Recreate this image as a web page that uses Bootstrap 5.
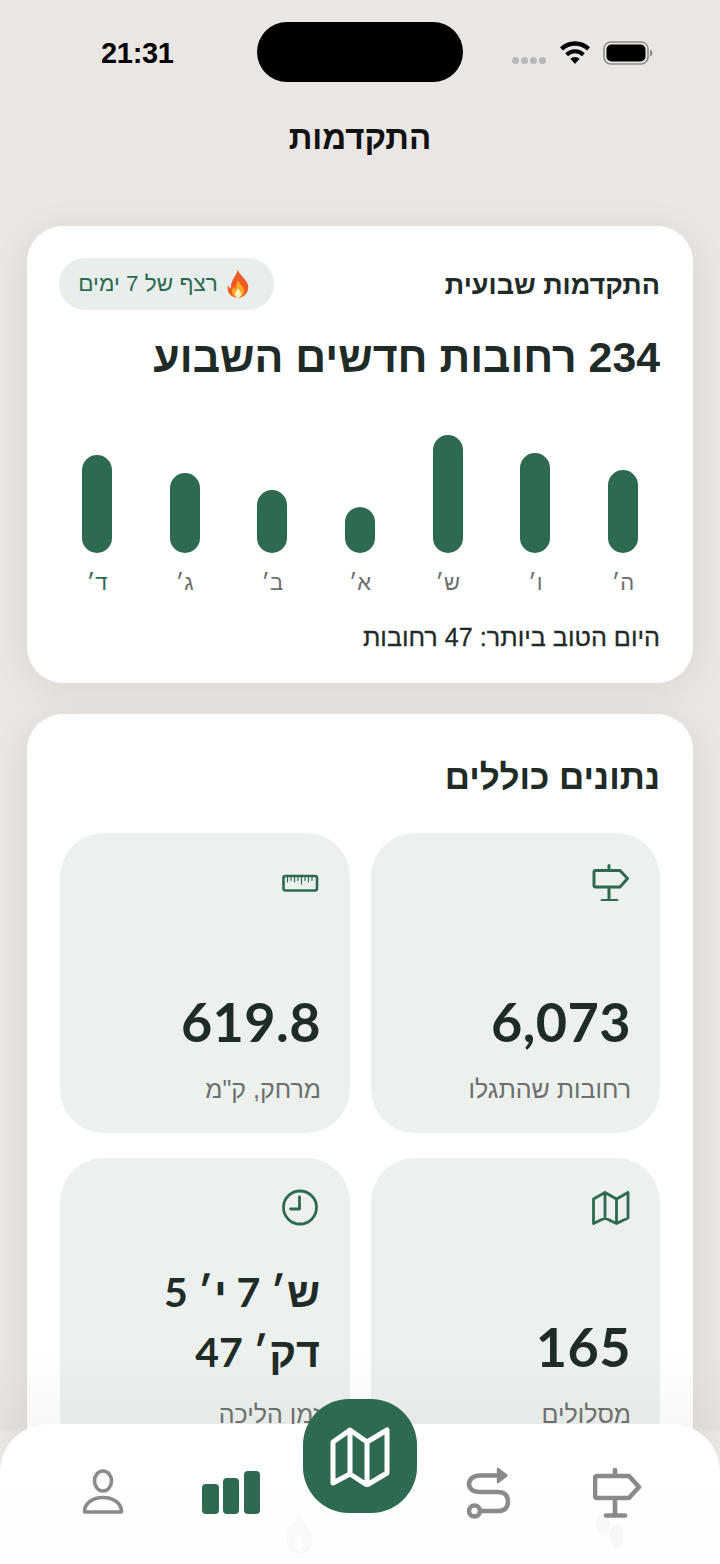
<!DOCTYPE html>
<html lang="he" dir="rtl">
<head>
    <meta charset="UTF-8">
    <title>התקדמות</title>
    <link href="https://cdn.jsdelivr.net/npm/bootstrap@5.3.0/dist/css/bootstrap.min.css" rel="stylesheet">
    <style>
        html, body { height: 100%; }
        body {
            background: #e9e6e3;
            font-family: "Liberation Sans", "Noto Sans", sans-serif;
            color: #1f2b27;
        }
        .phone { position: relative; width: 720px; height: 1564px; overflow: hidden; }
        .status-row { height: 105px; padding: 22px 67px 0 82px; direction: ltr; }
        .clock { font-size: 29px; font-weight: 700; color: #000; width: 108px; text-align: left; padding: 9px 0 0 19px; line-height: 45px; letter-spacing: -.3px; }
        .island { width: 206px; height: 60px; background: #000; border-radius: 30px; margin-left: 67px; }
        .status-icons { margin-left: auto; padding-top: 1px; height: 60px; }
        .signal-dots { margin-top: 15px; margin-right: 13px; gap: 2px; }
        .sig-dot { width: 7px; height: 7px; border-radius: 50%; background: #b9b7b5; }
        .wifi-icon { margin-right: 12px; }
        .page-title { font-size: 33px; font-weight: 700; color: #111; text-align: center; line-height: 40px; margin: 13px 0 68px; }
        .panel {
            background: #fff;
            border-radius: 36px;
            margin: 0 27px 31px;
            padding: 33px 33px 29px;
            box-shadow: 0 6px 40px rgba(50, 40, 30, .07);
        }
        .panel-head { height: 52px; }
        .panel-sub { font-size: 27px; font-weight: 700; line-height: 52px; }
        .streak { height: 52px; width: 215px; margin: 0 0 2px -1px; padding-right: 5px; border-radius: 26px; background: #e8eeeb; color: #2d6a4f; font-size: 22.5px; }
        .headline { font-size: 42.8px; font-weight: 700; line-height: 50px; margin: 21px 0 53px; }
        .bar-chart { height: 163px; padding: 0 22px; }
        .bar-col { width: 30px; }
        .bar-fill { width: 30px; background: #2d6a4f; border-radius: 15px; }
        .bar-stack { height: 118px; }
        .bar-day { font-size: 22px; color: #6b6f6d; line-height: 30px; margin-top: 15px; white-space: nowrap; }
        .bar-day.today { color: #2d6a4f; }
        .best-day { font-size: 25.2px; font-weight: 400; line-height: 30px; margin-top: 24px; padding-bottom: 2px; color: #1f2b27; -webkit-text-stroke: .3px #1f2b27; }
        .section-title { font-size: 35px; font-weight: 700; line-height: 40px; margin: 10px 0 36px; }
        .stat-grid { display: grid; grid-template-columns: 289px 290px; gap: 25px 21px; }
        .stat-box { background: #ecf1ee; border-radius: 44px; height: 300px; padding: 30px 30px 0; display: flex; flex-direction: column; }
        .stat-value { font-family: "Lato", "Liberation Sans", sans-serif; font-size: 54px; font-weight: 700; line-height: 64px; direction: ltr; text-align: right; margin: auto -1px 0 0; letter-spacing: .4px; }
        .stat-value.time { font-size: 41px; line-height: 60px; direction: rtl; margin: auto 0 -3px; letter-spacing: 0; }
        .stat-label { font-size: 25px; color: #6b6f6d; line-height: 32px; margin: 19px -1px 28px 0; }
        .stat-icon { width: 38px; height: 38px; margin-right: 0; flex: none; }
        .scroll-fade { position: absolute; left: 0; right: 0; top: 1350px; height: 80px; background: linear-gradient(rgba(233,230,227,0), rgba(120,120,115,.06)); }
        .tabbar {
            position: absolute; left: 0; right: 0; bottom: 0; height: 140px;
            background: linear-gradient(#fff 0, #fdfefd 100%);
            border-radius: 48px 48px 0 0;
            direction: ltr;
        }
        .tab-item { position: absolute; top: 40px; }
        .fab {
            position: absolute; left: 303px; top: 1399px; width: 114px; height: 114px;
            background: #2d6a4f; border-radius: 46px;
        }
        .ghost { position: absolute; opacity: .025; }
    </style>
</head>
<body>
<div class="phone">
    <!-- Status bar -->
    <div class="status-row d-flex align-items-start">
        <div class="clock">21:31</div>
        <div class="island"></div>
        <div class="status-icons d-flex align-items-center">
            <div class="signal-dots d-flex">
                <span class="sig-dot"></span><span class="sig-dot"></span><span class="sig-dot"></span><span class="sig-dot"></span>
            </div>
            <svg class="wifi-icon" width="32" height="24" viewBox="0 0 32 24"><path d="M16 23l-4.600-5.200a6.600 6.600 0 0 1 9.200 0zM9 15.200L6.300 12.200a14 14 0 0 1 19.400 0L23 15.200a10 10 0 0 0-14 0zM3.900 9.500L1 6.300a21.500 21.500 0 0 1 30 0L28.100 9.500a17.500 17.500 0 0 0-24.200 0z" fill="#000"/></svg>
            <svg width="50" height="24" viewBox="0 0 50 24"><rect x="1" y="1" width="44" height="22" rx="7" fill="none" stroke="#8f8d8b" stroke-width="1.600"/><rect x="3.500" y="3.500" width="39" height="17" rx="5" fill="#000"/><path d="M47 8.500c1.600.5 2.500 2 2.500 3.500s-.9 3-2.500 3.500z" fill="#8f8d8b"/></svg>
        </div>
    </div>

    <div class="page-title">התקדמות</div>

    <!-- Weekly progress -->
    <div class="panel">
        <div class="panel-head d-flex justify-content-between align-items-center">
            <div class="panel-sub">התקדמות שבועית</div>
            <div class="streak d-flex align-items-center justify-content-center gap-2">
                <svg width="24" height="28" viewBox="0 0 24 28"><path d="M12 0c1 5 8 8 10 15 1.500 7-4 13-10 13S0 23 2 15c.6 2 1.500 3 3 3.500C4 12 9 7 12 0z" fill="#ee5a24"/><path d="M12 10c.5 3 6 6 6 11 0 4-3 7-6 7s-6-3-6-7c0-2 1-3 2-4 .5 1 1 1.500 2 2 0-3 1-6 2-9z" fill="#f9a825"/><path d="M12 18c1 2 3 3 3 6 0 2-1.500 4-3 4s-3-2-3-4 2-3 3-6z" fill="#fff3c4"/></svg>
                <span>רצף של 7 ימים</span>
            </div>
        </div>
        <div class="headline">234 רחובות חדשים השבוע</div>
        <div class="bar-chart d-flex justify-content-between">
            <div class="bar-col d-flex flex-column align-items-center"><div class="bar-stack d-flex align-items-end"><div class="bar-fill" style="height:83px"></div></div><div class="bar-day">ה׳</div></div>
            <div class="bar-col d-flex flex-column align-items-center"><div class="bar-stack d-flex align-items-end"><div class="bar-fill" style="height:100px"></div></div><div class="bar-day">ו׳</div></div>
            <div class="bar-col d-flex flex-column align-items-center"><div class="bar-stack d-flex align-items-end"><div class="bar-fill" style="height:118px"></div></div><div class="bar-day">ש׳</div></div>
            <div class="bar-col d-flex flex-column align-items-center"><div class="bar-stack d-flex align-items-end"><div class="bar-fill" style="height:46px"></div></div><div class="bar-day">א׳</div></div>
            <div class="bar-col d-flex flex-column align-items-center"><div class="bar-stack d-flex align-items-end"><div class="bar-fill" style="height:63px"></div></div><div class="bar-day">ב׳</div></div>
            <div class="bar-col d-flex flex-column align-items-center"><div class="bar-stack d-flex align-items-end"><div class="bar-fill" style="height:80px"></div></div><div class="bar-day">ג׳</div></div>
            <div class="bar-col d-flex flex-column align-items-center"><div class="bar-stack d-flex align-items-end"><div class="bar-fill" style="height:98px"></div></div><div class="bar-day today">ד׳</div></div>
        </div>
        <div class="best-day">היום הטוב ביותר: 47 רחובות</div>
    </div>

    <!-- Totals -->
    <div class="panel" style="margin-bottom:0;padding-bottom:60px">
        <div class="section-title">נתונים כוללים</div>
        <div class="stat-grid">
            <div class="stat-box">
                <svg class="stat-icon" viewBox="0 0 38 38" fill="none" stroke="#2d6a4f" stroke-width="3" stroke-linecap="round" stroke-linejoin="round"><path d="M17 2.500v5M3.500 7.500H28l7.500 8-7.500 8.500H3.500a1.500 1.500 0 0 1-1.500-1.500V9a1.500 1.500 0 0 1 1.500-1.500zM17 24v13M10 37.500h15"/></svg>
                <div class="stat-value">6,073</div>
                <div class="stat-label">רחובות שהתגלו</div>
            </div>
            <div class="stat-box">
                <svg class="stat-icon" viewBox="0 0 38 38" fill="none" stroke="#2d6a4f" stroke-width="2.600" stroke-linecap="round" stroke-linejoin="round"><rect x="1.500" y="13" width="33.500" height="14.500" rx="2"/><path d="M5.500 14v5M9 14v3.500M12.500 14v5M16 14v3.500M19.500 14v7M23 14v3.500M26.500 14v5M30 14v3.500" stroke-width="1.200"/></svg>
                <div class="stat-value">619.8</div>
                <div class="stat-label">מרחק, ק"מ</div>
            </div>
            <div class="stat-box">
                <svg class="stat-icon" viewBox="0 0 38 38" fill="none" stroke="#2d6a4f" stroke-width="2.800" stroke-linecap="round" stroke-linejoin="round"><path d="M1.500 11L13 4.500 24.500 11 36 4.500V30l-11.500 5.500L13 30 1.500 35.500zM13 4.500V30M24.500 11v24.500"/></svg>
                <div class="stat-value">165</div>
                <div class="stat-label">מסלולים</div>
            </div>
            <div class="stat-box">
                <svg class="stat-icon" viewBox="0 0 38 38" fill="none" stroke="#2d6a4f" stroke-width="2.800" stroke-linecap="round" stroke-linejoin="round"><circle cx="18" cy="19.500" r="16.500"/><path d="M17.500 9v12H8.500"/></svg>
                <div class="stat-value time">ש׳ 7 י׳ 5<br>דק׳ 47</div>
                <div class="stat-label">זמן הליכה</div>
            </div>
        </div>
    </div>

    <div class="scroll-fade"></div>

    <!-- Bottom tabs -->
    <div class="tabbar">
        <svg class="ghost" style="left:282px;top:90px" width="34" height="40" viewBox="0 0 34 40"><path fill-rule="evenodd" d="M17 0c2 8 13 13 13 25 0 9-6 15-13 15S4 34 4 25C4 13 15 9 17 0zM17 20c-2 4-5 6-5 10 0 3 2 5 5 5s5-2 5-5c0-4-3-6-5-10z" fill="#2d6a4f"/></svg>
        <svg class="ghost" style="left:594px;top:88px" width="32" height="40" viewBox="0 0 32 40"><ellipse cx="9" cy="12" rx="7" ry="11" fill="#111"/><ellipse cx="23" cy="24" rx="7" ry="12" fill="#111"/></svg>
        <svg class="tab-item" style="left:82px;top:45px" width="42" height="46" viewBox="0 0 42 46" fill="none" stroke="#8a8a8a" stroke-width="3.600" stroke-linejoin="round"><ellipse cx="21" cy="12" rx="8.500" ry="10"/><path d="M2.500 42.500c0-8 8-14 18.500-14s18.500 6 18.500 14c0 .5 0 .5-.5.5H3c-.5 0-.5 0-.5-.5z"/></svg>
        <svg class="tab-item" style="left:202px;top:47px" width="58" height="43" viewBox="0 0 58 43" fill="#2d6a4f"><rect x="0" y="13" width="17" height="30" rx="4"/><rect x="21" y="7" width="16" height="36" rx="4"/><rect x="42" y="0" width="16" height="43" rx="4"/></svg>
        <svg class="tab-item" width="46" height="56" style="left:466px" viewBox="0 0 46 56" fill="none" stroke="#8a8a8a" stroke-width="4.600" stroke-linecap="round" stroke-linejoin="round"><path d="M36 11.500H14C7 11.500 3 15.500 3 20s4 8 11 8h18c7 0 10 4 10 9.500S39 47 32 47H15"/><path d="M32 5l8.500 6.500L32 18z" fill="#8a8a8a" stroke-width="2.400"/><circle cx="8.500" cy="47" r="5.500"/></svg>
        <svg class="tab-item" width="50" height="56" style="left:593px" viewBox="0 0 50 56" fill="none" stroke="#8a8a8a" stroke-width="4.600" stroke-linecap="round" stroke-linejoin="round"><path d="M22 6v6M4 12h32l10 11-10 11H4a2 2 0 0 1-2-2V14a2 2 0 0 1 2-2zM22 34v17M13 51.500h19"/></svg>
    </div>
    <div class="fab d-flex align-items-center justify-content-center">
        <svg width="60" height="62" viewBox="0 0 60 62" fill="none" stroke="#fff" stroke-width="5" stroke-linecap="round" stroke-linejoin="round"><path d="M3 17L20 5l17 12L57 5v43L37 60 20 49 3 58zM20 5v44M37 17v43"/></svg>
    </div>
</div>
<script src="https://cdn.jsdelivr.net/npm/bootstrap@5.3.0/dist/js/bootstrap.bundle.min.js"></script>
</body>
</html>
